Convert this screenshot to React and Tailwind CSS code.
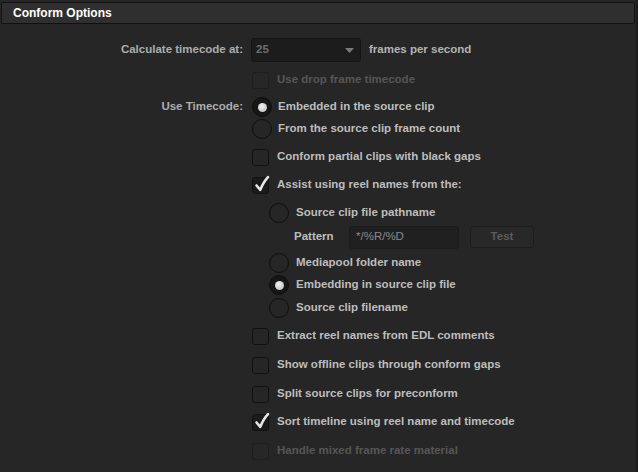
import React from "react";

const font = { fontFamily: '"Liberation Sans", Arial, sans-serif' };

function Check({ checked, disabled }) {
  return (
    <div className={"relative w-[17px] h-[17px] rounded-[3px] border shrink-0 " + (checked ? "bg-[#1b1b1b] border-[#111]" : disabled ? "bg-[#272727] border-[#1e1e1e]" : "bg-[#262626] border-[#111]")}>
      {checked && (
        <svg className="absolute left-[1px] top-[-3px]" width="16" height="18" viewBox="0 0 16 18">
          <path d="M2.5 10.5 L6.3 14.8 C8.5 9.5 10.8 5.5 14 2.2" fill="none" stroke="#e6e6e6" strokeWidth="2.6" strokeLinecap="round" strokeLinejoin="round" />
        </svg>
      )}
    </div>
  );
}

function Radio({ on }) {
  return (
    <div className={"w-[20px] h-[20px] rounded-full border-[1.5px] border-[#0e0e0e] flex items-center justify-center shrink-0 " + (on ? "bg-[#161616]" : "bg-[#262626]")}>
      {on && <div className="w-[9px] h-[9px] rounded-full bg-[radial-gradient(circle_at_40%_35%,#f0f0f0,#b8b8b8)]" />}
    </div>
  );
}

function Row({ label, children, className = "" }) {
  return (
    <div className={"flex items-center " + className}>
      <div className="w-[243px] text-right text-[#adadad] shrink-0">{label}</div>
      <div className="ml-[8px] flex items-center">{children}</div>
    </div>
  );
}

export default function App() {
  return (
    <div style={font} className="w-[638px] h-[472px] bg-[#262626] overflow-hidden border-r-2 border-[#1c1c1c] text-[11.5px] font-bold antialiased">
      <div className="pt-[2px] pl-[1px] pr-[1px]">
        <div className="h-[22px] w-[634px] bg-[#2f2f2f] border border-[#111] rounded-[2px] flex items-center pl-[11px] text-white text-[12px]">
          Conform Options
        </div>
      </div>

      <div className="flex flex-col">
        <Row label="Calculate timecode at:" className="mt-[14px] h-[24px]">
          <div className="w-[110px] h-[24px] bg-[#1c1c1c] border border-[#141414] rounded-[3px] flex items-center justify-between pl-[4px] pr-[6px] text-[#6f6f6f]">
            <span>25</span>
            <svg width="9" height="5" viewBox="0 0 9 5"><path d="M0 0 L9 0 L4.5 5 Z" fill="#7a7a7a" /></svg>
          </div>
          <span className="ml-[8px] text-[#b3b3b3]">frames per second</span>
        </Row>

        <Row label="" className="mt-[8px] h-[20px]">
          <div className="ml-[1px] flex items-center"><Check disabled /><span className="ml-[8px] text-[#565656]">Use drop frame timecode</span></div>
        </Row>

        <Row label="Use Timecode:" className="mt-[7px] h-[20px]">
          <div className="ml-[1px] flex items-center"><Radio on /><span className="ml-[6px] text-[#bdbdbd]">Embedded in the source clip</span></div>
        </Row>
        <Row label="" className="mt-[2px] h-[20px]">
          <div className="ml-[1px] flex items-center"><Radio /><span className="ml-[6px] text-[#bdbdbd]">From the source clip frame count</span></div>
        </Row>

        <Row label="" className="mt-[8px] h-[20px]">
          <div className="ml-[1px] flex items-center"><Check /><span className="ml-[8px] text-[#bdbdbd]">Conform partial clips with black gaps</span></div>
        </Row>
        <Row label="" className="mt-[8px] h-[20px]">
          <div className="ml-[1px] flex items-center"><Check checked /><span className="ml-[8px] text-[#bdbdbd]">Assist using reel names from the:</span></div>
        </Row>

        <Row label="" className="mt-[8px] h-[20px]">
          <div className="ml-[18px] flex items-center"><Radio /><span className="ml-[7px] text-[#bdbdbd]">Source clip file pathname</span></div>
        </Row>
        <Row label="" className="mt-[4px] h-[20px]">
          <div className="ml-[43px] flex items-center">
            <span className="text-[#bdbdbd] w-[55px]">Pattern</span>
            <div className="w-[110px] h-[23px] bg-[#202020] border border-[#1c1c1c] rounded-[3px] flex items-center pl-[6px] text-[#8a8a8a] font-normal">*/%R/%D</div>
            <div className="ml-[11px] w-[64px] h-[22px] bg-[#282828] border border-[#1d1d1d] rounded-[3px] flex items-center justify-center text-[#5c5c5c]">Test</div>
          </div>
        </Row>

        <Row label="" className="mt-[6px] h-[20px]">
          <div className="ml-[18px] flex items-center"><Radio /><span className="ml-[7px] text-[#bdbdbd]">Mediapool folder name</span></div>
        </Row>
        <Row label="" className="mt-[2px] h-[20px]">
          <div className="ml-[18px] flex items-center"><Radio on /><span className="ml-[7px] text-[#bdbdbd]">Embedding in source clip file</span></div>
        </Row>
        <Row label="" className="mt-[3px] h-[20px]">
          <div className="ml-[18px] flex items-center"><Radio /><span className="ml-[7px] text-[#bdbdbd]">Source clip filename</span></div>
        </Row>

        <Row label="" className="mt-[8px] h-[20px]">
          <div className="ml-[1px] flex items-center"><Check /><span className="ml-[8px] text-[#bdbdbd]">Extract reel names from EDL comments</span></div>
        </Row>
        <Row label="" className="mt-[9px] h-[20px]">
          <div className="ml-[1px] flex items-center"><Check /><span className="ml-[8px] text-[#bdbdbd]">Show offline clips through conform gaps</span></div>
        </Row>
        <Row label="" className="mt-[9px] h-[20px]">
          <div className="ml-[1px] flex items-center"><Check /><span className="ml-[8px] text-[#bdbdbd]">Split source clips for preconform</span></div>
        </Row>
        <Row label="" className="mt-[8px] h-[20px]">
          <div className="ml-[1px] flex items-center"><Check checked /><span className="ml-[8px] text-[#bdbdbd]">Sort timeline using reel name and timecode</span></div>
        </Row>
        <Row label="" className="mt-[9px] h-[20px]">
          <div className="ml-[1px] flex items-center"><Check disabled /><span className="ml-[8px] text-[#565656]">Handle mixed frame rate material</span></div>
        </Row>
      </div>
    </div>
  );
}
